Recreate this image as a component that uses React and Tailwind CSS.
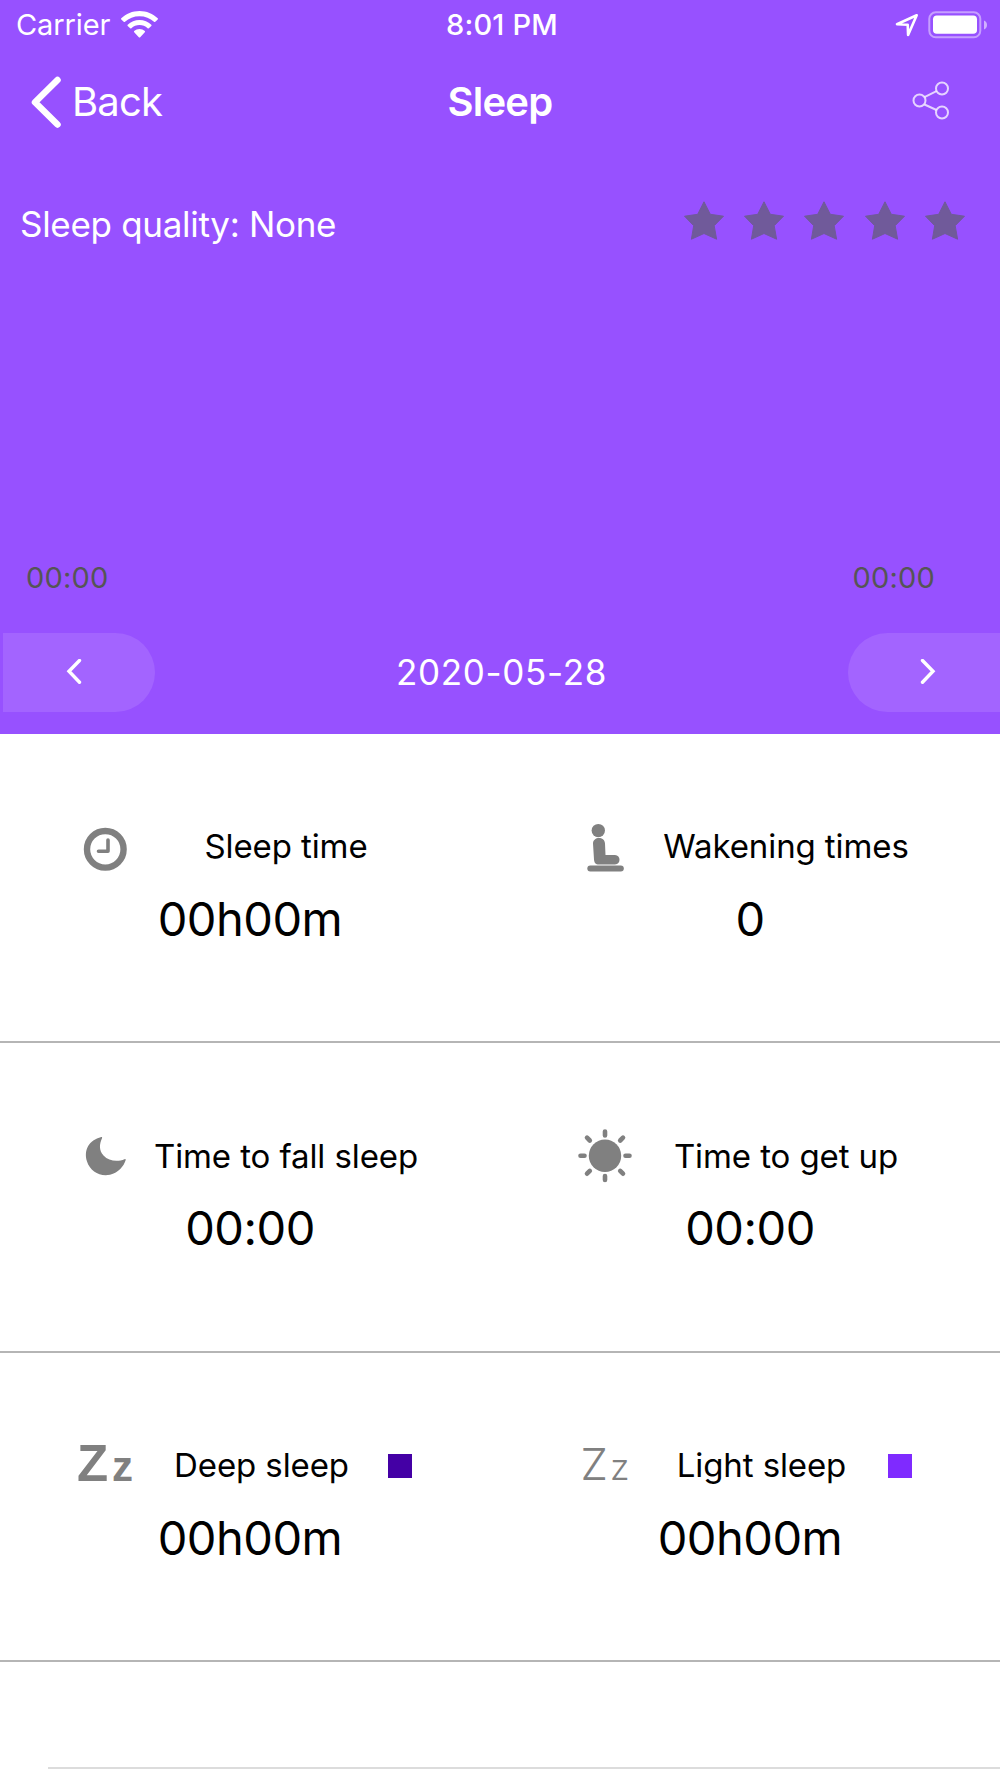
const STARS = [1, 2, 3, 4, 5]

const STATS = [
  [
    { label: 'Sleep time', value: '00h00m', icon: <ClockIcon />, tracking: 'tracking-[-0.1px]' },
    { label: 'Wakening times', value: '0', icon: <SeatedIcon />, tracking: 'tracking-[-0.1px]' },
  ],
  [
    { label: 'Time to fall sleep', value: '00:00', icon: <MoonIcon />, tracking: 'tracking-[-0.1px]' },
    { label: 'Time to get up', value: '00:00', icon: <SunIcon />, tracking: 'tracking-[-0.1px]' },
  ],
  [
    { label: 'Deep sleep', value: '00h00m', icon: <DeepIcon />, swatch: 'bg-[#4400a5]', tracking: 'tracking-[-0.1px]' },
    { label: 'Light sleep', value: '00h00m', icon: <LightIcon />, swatch: 'bg-[#7f2aff]', tracking: 'tracking-[-0.1px]' },
  ],
]

function ClockIcon() {
  return (
    <svg width="60" height="60" viewBox="0 0 60 60" fill="none" stroke="#808080">
      <circle cx="30.3" cy="32.3" r="18.3" strokeWidth="6.4" />
      <path d="M33 23v11.3h-9.5" strokeWidth="3.6" strokeLinecap="round" strokeLinejoin="round" />
    </svg>
  )
}

function SeatedIcon() {
  return (
    <svg width="60" height="60" viewBox="0 0 60 60" fill="#808080">
      <circle cx="23.3" cy="13.6" r="6.7" />
      <path d="M18 26.5c0-7 11.5-7.5 12 0l.5 11.5h9.500c6 0 6 9.500 0 9.500H24c-3.500 0-4.800-2-5-5z" />
      <rect x="12.300" y="48.500" width="36.500" height="6" rx="3" />
    </svg>
  )
}

function MoonIcon() {
  return (
    <svg width="60" height="60" viewBox="0 0 60 60" fill="#808080">
      <path d="M26.300 11C14 14 8.500 24 12 35.500c3 9.500 13 15.500 23 13.200 8.500-2 13.800-8.500 15.700-14.700.2-.9-.4-1.200-1.200-.8C43 36 34 35.500 28.500 29.500 23.800 24.300 24.300 18 27 12.200c.3-.8 0-1.300-.7-1.200z" />
    </svg>
  )
}

function SunIcon() {
  return (
    <svg width="60" height="60" viewBox="0 0 60 60" fill="#808080" stroke="#808080">
      <circle cx="30" cy="29.700" r="16.200" stroke="none" />
      <path
        d="M30 5.500v4M30 50v4M5.500 29.700h4M50.500 29.700h4M12 11.700l2.800 2.800M45.200 14.500l2.800-2.800M12 47.700l2.800-2.800M45.200 44.900l2.800 2.800"
        strokeWidth="4.600"
        strokeLinecap="round"
      />
    </svg>
  )
}

function DeepIcon() {
  return (
    <div className="flex items-baseline justify-center gap-[4px] font-['Liberation_Sans'] font-bold leading-[60px] text-[#808080]">
      <span className="text-[51px]">Z</span>
      <span className="text-[42px]">z</span>
    </div>
  )
}

function LightIcon() {
  return (
    <div className="flex items-baseline justify-center gap-[2px] font-light leading-[60px] text-[#808080]">
      <span className="text-[44px]">Z</span>
      <span className="text-[36px]">z</span>
    </div>
  )
}

function StatusBar() {
  return (
    <div className="grid h-[50px] grid-cols-3 items-center pl-4 pr-[12px] text-[29px]">
      <div className="flex items-center gap-[11px]">
        <span className="tracking-[-0.1px]">Carrier</span>
        <svg width="37" height="28" viewBox="0 0 37 28" fill="#fff">
          <path d="M18.500 0C11.500 0 5 2.800.3 7.200c-.4.400-.4.800 0 1.200l2.400 2.400c.4.400.9.400 1.300 0C7.800 7.200 13 5.200 18.500 5.200s10.700 2 14.500 5.600c.4.400.9.400 1.300 0l2.400-2.400c.4-.4.400-.8 0-1.200C32 2.800 25.500 0 18.500 0z" />
          <path d="M18.500 9c-4.500 0-8.700 1.800-11.800 4.700-.4.400-.4.800 0 1.200l2.500 2.400c.4.400.8.400 1.200 0 2.200-2 5-3.200 8.100-3.200s5.900 1.200 8.100 3.200c.4.400.8.400 1.200 0l2.500-2.400c.4-.4.400-.8 0-1.200C27.200 10.800 23 9 18.500 9z" />
          <path d="M18.500 18c-2 0-3.900.8-5.300 2.100-.4.400-.4.800 0 1.200l4.600 4.900c.4.400 1 .4 1.400 0l4.600-4.900c.4-.4.400-.8 0-1.200-1.400-1.300-3.300-2.100-5.300-2.100z" />
        </svg>
      </div>
      <span className="text-center font-medium tracking-[0.2px]">8:01 PM</span>
      <div className="flex items-center justify-end gap-[9px]">
        <svg width="24" height="24" viewBox="0 0 24 24" fill="none" stroke="#fff" strokeWidth="2.600" strokeLinejoin="round">
          <path d="M21.700 2.300L2 11.300l10.700.4.400 10.300z" />
        </svg>
        <svg width="60" height="28" viewBox="0 0 60 28">
          <rect x="1.300" y="1.300" width="51" height="25" rx="6.500" fill="none" stroke="#fff" strokeOpacity=".45" strokeWidth="2" />
          <rect x="5" y="4.500" width="44" height="18.300" rx="3.800" fill="#fff" />
          <path d="M56 9.500c4 1.500 4 7.500 0 9z" fill="#fff" fillOpacity=".55" />
        </svg>
      </div>
    </div>
  )
}

function NavBar() {
  return (
    <div className="grid h-[103px] grid-cols-3 items-center pl-[28px] pr-[50px] text-[40px]">
      <button className="flex items-center gap-[9px] text-left">
        <svg width="35" height="54" viewBox="0 0 35 54" fill="none" stroke="#fff" strokeWidth="6.500" strokeLinecap="round" strokeLinejoin="round">
          <path d="M29.500 5L7 27.300l22.500 22.200" />
        </svg>
        <span className="tracking-[-0.8px]">Back</span>
      </button>
      <h1 className="pl-[22px] text-center font-semibold tracking-[-0.8px]">Sleep</h1>
      <svg className="justify-self-end" width="38" height="42" viewBox="0 0 38 42" fill="none" stroke="#fff" strokeOpacity=".75" strokeWidth="2">
        <circle cx="7.500" cy="19.500" r="6" />
        <circle cx="30" cy="7.500" r="6" />
        <circle cx="30" cy="31.500" r="6" />
        <path d="M12.500 16.200l12-6M12.500 23.500l12 5.500" />
      </svg>
    </div>
  )
}

function Stars() {
  return (
    <div className="flex gap-[20.300px]">
      {STARS.map(n => (
        <svg key={n} width="40" height="39" viewBox="0 0 40 39" fill="#705a9a" stroke="#705a9a" strokeWidth="1" strokeLinejoin="round">
          <path d="M20 .8l6.300 12.500 13.200 1.900-9.300 9.500L32.600 38.200 20 32.500 7.400 38.200l2.300-13.500L.5 15.200l13.200-1.900z" />
        </svg>
      ))}
    </div>
  )
}

function DateBar() {
  return (
    <div className="flex h-[79px] items-center justify-between pl-[3px]">
      <button className="flex h-full w-[152px] items-center rounded-r-full bg-[#a364ff] pl-[62px]">
        <svg width="18" height="28" viewBox="0 0 18 28" fill="none" stroke="#fff" strokeWidth="3.400" strokeLinecap="round">
          <path d="M14.500 1.500L4 12.300l10.500 10.900" />
        </svg>
      </button>
      <span className="text-[35px] tracking-[0.7px]">2020-05-28</span>
      <button className="flex h-full w-[152px] items-center rounded-l-full bg-[#a364ff] pl-[71px]">
        <svg width="18" height="28" viewBox="0 0 18 28" fill="none" stroke="#fff" strokeWidth="3.400" strokeLinecap="round">
          <path d="M3.500 1.500L14 12.300 3.500 23.200" />
        </svg>
      </button>
    </div>
  )
}

function Stat({ stat }) {
  return (
    <div className="flex w-1/2 flex-col pt-[83px]">
      <div className="flex h-[60px] items-center pl-[75px]">
        <div className="w-[60px] shrink-0">{stat.icon}</div>
        <span className={`text-center text-[33px] whitespace-nowrap ${stat.tracking} ${stat.swatch ? 'w-[253px]' : 'w-[302px]'}`}>
          {stat.label}
        </span>
        {stat.swatch && <span className={`h-[24px] w-[24px] ${stat.swatch}`} />}
      </div>
      <div className="mt-[2px] text-center text-[47px] leading-[80px] tracking-[-0.5px]">{stat.value}</div>
    </div>
  )
}

export default function App() {
  return (
    <div className="flex h-[1778px] w-[1000px] flex-col overflow-hidden bg-white font-['Inter',sans-serif] text-black">
      <header className="flex h-[734px] shrink-0 flex-col bg-[#9751ff] text-white">
        <StatusBar />
        <NavBar />
        <div className="flex h-[142px] items-center justify-between pl-5 pr-[35px]">
          <span className="text-[35px] tracking-[-0.3px]">Sleep quality: None</span>
          <div className="pb-[7px]">
            <Stars />
          </div>
        </div>
        {/* Chart range */}
        <div className="mt-auto flex h-[60px] items-center justify-between pl-[26px] pr-[65px] text-[29px] tracking-[0.2px] text-[#555]">
          <span>00:00</span>
          <span>00:00</span>
        </div>
        <div className="pt-[25px] pb-[22px]">
          <DateBar />
        </div>
      </header>

      {STATS.map((row, i) => (
        <section key={i} className="flex h-[309.300px] shrink-0 border-b-2 border-[#b5b5b5]">
          {row.map(stat => (
            <Stat key={stat.label} stat={stat} />
          ))}
        </section>
      ))}

      <div className="mt-[105px] ml-12 h-[2px] shrink-0 bg-[#dcdcdc]" />
    </div>
  )
}
